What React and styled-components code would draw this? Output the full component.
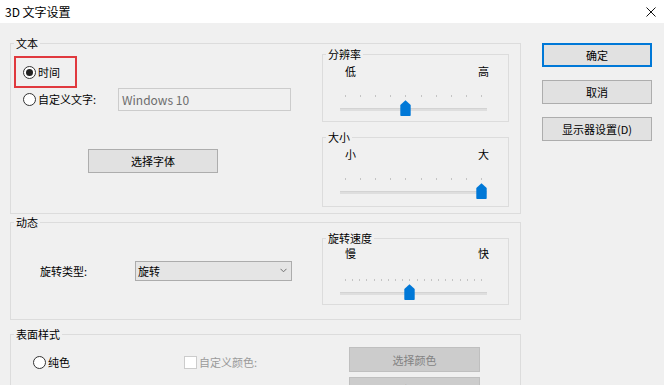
import React from "react";
import styled, { createGlobalStyle } from "styled-components";

const GlobalStyle = createGlobalStyle`
  * { box-sizing: border-box; }
  html, body {
    margin: 0;
    padding: 0;
    width: 664px;
    height: 385px;
    overflow: hidden;
    background: #f0f0f0;
  }
  body {
    font-family: "Noto Sans CJK SC", "Noto Sans", sans-serif;
    font-size: 11px;
    color: #000;
  }
`;

const Window = styled.div`
  width: 664px;
  height: 385px;
  display: flex;
  flex-direction: column;
  background: #f0f0f0;
  overflow: hidden;
`;

const TitleBar = styled.div`
  height: 23px;
  flex: none;
  background: #fff;
  display: flex;
  align-items: center;
  justify-content: space-between;
  padding: 0 8px 0 5px;
`;

const Title = styled.span`
  font-size: 12px;
  line-height: 14px;
`;

const Body = styled.div`
  display: flex;
  align-items: flex-start;
  gap: 21px;
  padding: 14px 0 0 10px;
`;

const MainColumn = styled.div`
  width: 511px;
  display: flex;
  flex-direction: column;
`;

const SideColumn = styled.div`
  width: 110px;
  margin-top: 6px;
  display: flex;
  flex-direction: column;
  gap: 13px;
`;

const Group = styled.fieldset`
  margin: ${(p) => p.$top || 0}px 0 0;
  padding: 0;
  border: 1px solid #dcdcdc;
  width: ${(p) => p.$width}px;
  height: ${(p) => p.$height}px;
  min-width: 0;
  flex: none;
  display: flex;
  align-items: flex-start;
`;

const Legend = styled.legend`
  margin-left: 3px;
  padding: 0 2px;
  font-size: 11px;
  line-height: 13px;
`;

const Pane = styled.div`
  flex: 1;
  display: flex;
  flex-direction: column;
  align-items: flex-start;
  padding-top: ${(p) => p.$top || 0}px;
`;

const SidePane = styled.div`
  width: 187px;
  flex: none;
  margin: ${(p) => p.$top || 0}px 11px 0 0;
  display: flex;
  flex-direction: column;
  gap: 9px;
`;

const Highlight = styled.div`
  width: 63px;
  height: 32px;
  margin-left: 3px;
  border: 2px solid #e0393e;
  display: flex;
  align-items: center;
  padding-left: 7px;
`;

const OptionRow = styled.div`
  height: 23px;
  margin: ${(p) => p.$top || 0}px 0 0 ${(p) => p.$left || 0}px;
  display: flex;
  align-items: center;
`;

const Option = styled.label`
  display: flex;
  align-items: center;
  gap: 2px;
  width: ${(p) => (p.$width ? `${p.$width}px` : "auto")};
  color: ${(p) => (p.$disabled ? "#9a9a9a" : "#000")};
  line-height: 13px;
`;

const RadioCircle = styled.span`
  width: 13px;
  height: 13px;
  border-radius: 50%;
  border: 1px solid #333;
  background: #fff;
  display: flex;
  align-items: center;
  justify-content: center;
  flex: none;

  &::after {
    content: "";
    width: 7px;
    height: 7px;
    border-radius: 50%;
    background: #222;
    display: ${(p) => (p.$checked ? "block" : "none")};
  }
`;

const CheckBox = styled.span`
  width: 13px;
  height: 13px;
  border: 1px solid #cccccc;
  background: #fff;
  flex: none;
`;

const TextField = styled.div`
  width: 173px;
  height: 23px;
  border: 1px solid #cccccc;
  background: #f0f0f0;
  color: #6d6d6d;
  font-size: 12px;
  line-height: 21px;
  padding-left: 3px;
`;

const PushButton = styled.button`
  width: ${(p) => p.$width}px;
  height: ${(p) => p.$height || 24}px;
  margin: ${(p) => p.$top || 0}px 0 0 ${(p) => p.$left || 0}px;
  padding: 0;
  font: inherit;
  font-size: 11px;
  color: ${(p) => (p.disabled ? "#838383" : "#000")};
  background: ${(p) => (p.disabled ? "#cccccc" : "#e1e1e1")};
  border: 1px solid
    ${(p) => (p.$default ? "#0078d7" : p.disabled ? "#bfbfbf" : "#adadad")};
  box-shadow: ${(p) => (p.$default ? "inset 0 0 0 1px #0078d7" : "none")};
  flex: none;
`;

const FieldLabel = styled.span`
  width: ${(p) => p.$width}px;
  margin-left: ${(p) => p.$left || 0}px;
  flex: none;
`;

const Select = styled.div`
  width: 157px;
  height: 20px;
  border: 1px solid #acacac;
  background: #e5e5e5;
  display: flex;
  align-items: center;
  justify-content: space-between;
  padding: 0 4px 0 2px;
`;

const SliderGroup = styled.fieldset`
  margin: 0;
  padding: 0;
  border: 1px solid #dcdcdc;
  height: ${(p) => p.$height}px;
  min-width: 0;
`;

const SliderBody = styled.div`
  padding: 0 19px 0 22px;
`;

const EndLabels = styled.div`
  display: flex;
  justify-content: space-between;
  margin-top: ${(p) => p.$top}px;
  line-height: 13px;
`;

const Slider = styled.div`
  width: 147px;
  margin: ${(p) => p.$top}px 0 0 -5px;
`;

const TickRow = styled.div`
  height: 2px;
  margin: 0 5px;
  display: flex;
  justify-content: space-between;
`;

const Tick = styled.span`
  width: 1px;
  height: 2px;
  background: #c4c4c4;
`;

const TrackArea = styled.div`
  position: relative;
  height: 17px;
  margin-top: 3px;
  display: flex;
  align-items: center;
`;

const Track = styled.div`
  width: 100%;
  height: 3px;
  margin-top: 2px;
  background: #dedede;
  border-top: 1px solid #d3d3d3;
`;

const Thumb = styled.svg`
  position: absolute;
  top: 0;
  width: 11px;
  height: 16px;
`;

const Row = styled.div`
  display: grid;
  grid-template-columns: 173px 165px 131px;
  align-items: start;
  width: 100%;
`;

const ButtonStack = styled.div`
  display: flex;
  flex-direction: column;
  gap: 5px;
  padding-top: 6px;
`;

const CloseIcon = () => (
  <svg width="10" height="10" viewBox="0 0 10 10">
    <path d="M0.5 0.5 L9.5 9.5 M9.5 0.5 L0.5 9.5" stroke="#111" strokeWidth="1" />
  </svg>
);

const Chevron = () => (
  <svg width="7" height="5" viewBox="0 0 7 5">
    <path d="M0.5 0.8 L3.5 3.8 L6.5 0.8" stroke="#707070" fill="none" strokeWidth="1" />
  </svg>
);

const TrackBar = ({ ticks, value, top }) => {
  const frac = value / (ticks - 1);
  return (
    <Slider $top={top}>
      <TickRow>
        {Array.from({ length: ticks }).map((_, i) => (
          <Tick key={i} />
        ))}
      </TickRow>
      <TrackArea>
        <Track />
        <Thumb viewBox="0 0 11 16" style={{ left: `${frac * 136}px` }}>
          <path d="M5.5 0.3 L10.7 5 L10.7 15.2 Q10.7 16 9.9 16 L1.1 16 Q0.3 16 0.3 15.2 L0.3 5 Z" fill="#0078d7" />
        </Thumb>
      </TrackArea>
    </Slider>
  );
};

const SliderBox = ({ title, low, high, ticks, value, height, labelTop }) => (
  <SliderGroup $height={height}>
    <Legend>{title}</Legend>
    <SliderBody>
      <EndLabels $top={labelTop}>
        <span>{low}</span>
        <span>{high}</span>
      </EndLabels>
      <TrackBar ticks={ticks} value={value} top={21 - labelTop} />
    </SliderBody>
  </SliderGroup>
);

const Radio = ({ checked, label, width }) => (
  <Option $width={width}>
    <RadioCircle $checked={checked} />
    <span>{label}</span>
  </Option>
);

export default function App() {
  return (
    <>
      <GlobalStyle />
      <Window>
        <TitleBar>
          <Title>3D 文字设置</Title>
          <CloseIcon />
        </TitleBar>
        <Body>
          <MainColumn>
            <Group $width={511} $height={177}>
              <Legend>文本</Legend>
              <Pane $top={6}>
                <Highlight>
                  <Radio checked label="时间" />
                </Highlight>
                <OptionRow $left={12}>
                  <Radio label="自定义文字:" width={95} />
                  <TextField>Windows 10</TextField>
                </OptionRow>
                <PushButton $width={130} $top={38} $left={77}>
                  选择字体
                </PushButton>
              </Pane>
              <SidePane $top={-2}>
                <SliderBox title="分辨率" low="低" high="高" ticks={10} value={4} height={74} labelTop={4} />
                <SliderBox title="大小" low="小" high="大" ticks={10} value={9} height={76} labelTop={4} />
              </SidePane>
            </Group>

            <Group $width={511} $height={104} $top={2}>
              <Legend>动态</Legend>
              <Pane $top={30}>
                <OptionRow>
                  <FieldLabel $width={95} $left={29}>旋转类型:</FieldLabel>
                  <Select>
                    <span>旋转</span>
                    <Chevron />
                  </Select>
                </OptionRow>
              </Pane>
              <SidePane $top={3}>
                <SliderBox title="旋转速度" low="慢" high="快" ticks={20} value={9} height={73} labelTop={2} />
              </SidePane>
            </Group>

            <Group $width={511} $height={90} $top={8}>
              <Legend>表面样式</Legend>
              <Row>
                <OptionRow $left={22} $top={10}>
                  <Radio label="纯色" />
                </OptionRow>
                <OptionRow $top={10}>
                  <Option $disabled>
                    <CheckBox />
                    <span>自定义颜色:</span>
                  </Option>
                </OptionRow>
                <ButtonStack>
                  <PushButton $width={131} $height={25} disabled>
                    选择颜色
                  </PushButton>
                  <PushButton $width={131} $height={25} disabled>
                    选择纹理
                  </PushButton>
                </ButtonStack>
              </Row>
            </Group>
          </MainColumn>

          <SideColumn>
            <PushButton $width={110} $default>
              确定
            </PushButton>
            <PushButton $width={110}>取消</PushButton>
            <PushButton $width={110}>显示器设置(D)</PushButton>
          </SideColumn>
        </Body>
      </Window>
    </>
  );
}
